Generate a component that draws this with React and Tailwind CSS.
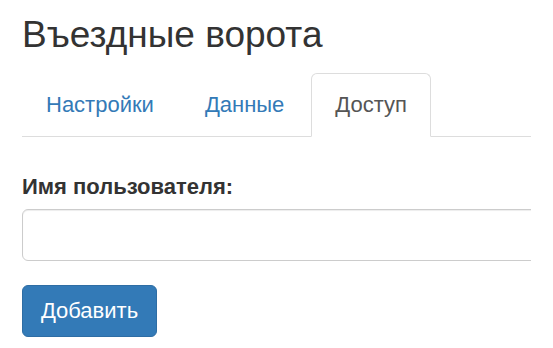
export default function App() {
  const font = { fontFamily: '"Liberation Sans", Arial, sans-serif' };
  return (
    <div className="w-[553px] h-[348px] bg-white overflow-hidden text-[#333]" style={font}>
      <div className="px-[22px]">
        <div className="overflow-hidden">
          <h3 className="pt-[15px] text-[37px] leading-[40px] font-normal text-[#333]">Въездные ворота</h3>
          <ul className="mt-[18px] flex border-b border-[#ddd] text-[22px] leading-[30px]">
            <li className="mr-[3px] -mb-px">
              <a className="block px-[23px] py-[16px] border border-transparent rounded-t-[6px] text-[#337ab7]">Настройки</a>
            </li>
            <li className="mr-[3px] -mb-px">
              <a className="block px-[23px] py-[16px] border border-transparent rounded-t-[6px] text-[#337ab7]">Данные</a>
            </li>
            <li className="mr-[3px] -mb-px">
              <a className="block px-[23px] py-[16px] border border-[#ddd] border-b-white rounded-t-[6px] text-[#555] bg-white">Доступ</a>
            </li>
          </ul>
          <div className="mt-[38px]">
            <label className="block text-[22px] leading-[24px] font-bold text-[#333]">Имя пользователя:</label>
            <div className="mt-[10px] w-[600px]">
              <input className="block w-full h-[52px] border border-[#ccc] rounded-[6px] bg-white outline-none shadow-[inset_0_1px_1px_rgba(0,0,0,0.075)]" />
            </div>
          </div>
          <button className="mt-[24px] w-[135px] h-[52px] rounded-[6px] bg-[#337ab7] border border-[#2e6da4] text-white text-[22px] leading-[30px]">Добавить</button>
        </div>
      </div>
    </div>
  );
}
